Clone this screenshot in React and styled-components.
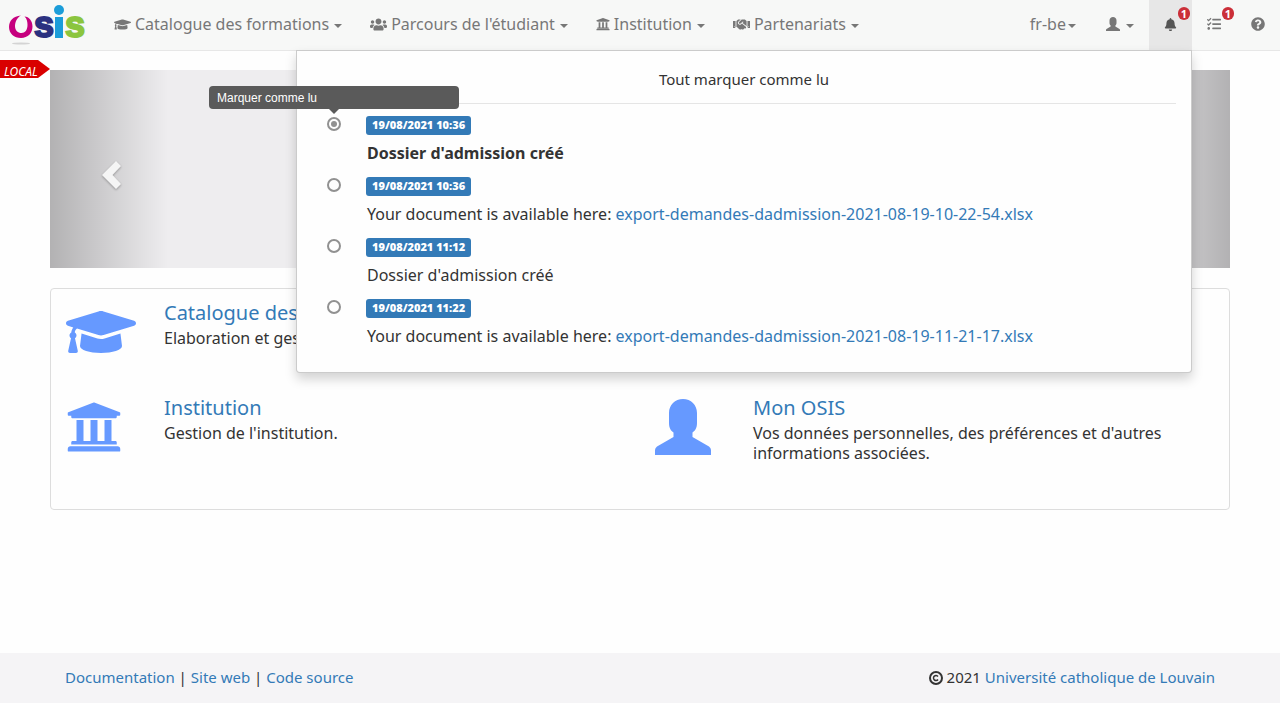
import React from "react";
import styled, { createGlobalStyle, css } from "styled-components";
import {
  FaGraduationCap,
  FaUsers,
  FaUniversity,
  FaHandshake,
  FaBell,
  FaTasks,
  FaQuestionCircle,
} from "react-icons/fa";

const UserIcon = ({ size }) => (
  <svg width={size} height={size} viewBox="0 0 56 56" fill="currentColor" aria-hidden="true">
    <path d="M28 0C36 0 42 6 42 14V24C42 29 40 32 37.500 33.500V38L54 47.500Q56 49 56 51V56H0V51Q0 49 2 47.500L18.500 38V33.500C16 32 14 29 14 24V14C14 6 20 0 28 0Z" />
  </svg>
);

const Chevron = ({ flip }) => (
  <svg width="20" height="28" viewBox="0 0 20 28" fill="currentColor" aria-hidden="true">
    <path
      d="M0 14L14 0L19 5L10.500 14L19 23L14 28Z"
      transform={flip ? "matrix(-1 0 0 1 20 0)" : undefined}
    />
  </svg>
);

const ReadIcon = ({ dot }) => (
  <svg width="14" height="14" viewBox="0 0 14 14" aria-hidden="true">
    <circle cx="7" cy="7" r="6" fill="none" stroke="currentColor" strokeWidth="2" />
    {dot && <circle cx="7" cy="7" r="3" fill="currentColor" />}
  </svg>
);

const CopyrightIcon = () => (
  <svg width="14" height="14" viewBox="0 0 14 14" fill="none" stroke="currentColor" aria-hidden="true">
    <circle cx="7" cy="7" r="6" strokeWidth="2" />
    <path d="M9 5.500A2.500 2.500 0 1 0 9 8.500" strokeWidth="1.500" />
  </svg>
);

const Logo = () => (
  <svg width="78" height="42" viewBox="0 0 78 42" role="img" aria-label="osis">
    <ellipse cx="12" cy="38.500" rx="9" ry="1" fill="#d4d4d4" />
    <path
      fill="#c6007e"
      d="M12 10.500C4 11 0 16 0 22C0 28.500 5 33 12 33S23.500 28 23.500 21.500C23.500 16 20 11.500 15.500 11.500C18 13.500 18.500 17 18.500 20C18.500 25 16 28 12.500 28S6 25.500 6 21C6 17 8 12.500 12 10.500Z"
    />
    <g fontFamily="Liberation Sans, sans-serif" fontWeight="700" fontSize="36" strokeWidth="2">
      <text x="25" y="32" fill="#2b3180" stroke="#2b3180">s</text>
      <text x="56" y="32" fill="#8bc53f" stroke="#8bc53f">s</text>
    </g>
    <circle cx="50" cy="5" r="5" fill="#1b9dd9" />
    <rect x="46" y="12" width="8" height="21" fill="#1b9dd9" />
  </svg>
);

const navItems = [
  { label: "Catalogue des formations", icon: <FaGraduationCap size={17} /> },
  { label: "Parcours de l'étudiant", icon: <FaUsers size={17} /> },
  { label: "Institution", icon: <FaUniversity size={14} /> },
  { label: "Partenariats", icon: <FaHandshake size={17} /> },
];

const notifications = [
  { date: "19/08/2021 10:36", text: "Dossier d'admission créé", unread: true },
  {
    date: "19/08/2021 10:36",
    text: "Your document is available here: ",
    file: "export-demandes-dadmission-2021-08-19-10-22-54.xlsx",
  },
  { date: "19/08/2021 11:12", text: "Dossier d'admission créé" },
  {
    date: "19/08/2021 11:22",
    text: "Your document is available here: ",
    file: "export-demandes-dadmission-2021-08-19-11-21-17.xlsx",
  },
];

const sections = [
  {
    title: "Catalogue des formations",
    text: "Elaboration et gestion",
    icon: <FaGraduationCap size={70} />,
    wide: true,
  },
  {
    title: "Institution",
    text: "Gestion de l'institution.",
    icon: <FaUniversity size={56} />,
  },
  {
    title: "Mon OSIS",
    text: "Vos données personnelles, des préférences et d'autres informations associées.",
    icon: <UserIcon size={56} />,
  },
];

const Notifications = () => (
  <Menu>
    <MarkAll type="button">Tout marquer comme lu</MarkAll>
    <NotificationList>
      {notifications.map((item, i) => (
        <Notification key={i}>
          <MarkButton type="button" aria-label="Marquer comme lu">
            <ReadIcon dot={item.unread} />
            {item.unread && <Tooltip role="tooltip">Marquer comme lu</Tooltip>}
          </MarkButton>
          <div>
            <DateLabel>{item.date}</DateLabel>
            <Message $unread={item.unread}>
              {item.text}
              {item.file && <Link href="#">{item.file}</Link>}
            </Message>
          </div>
        </Notification>
      ))}
    </NotificationList>
  </Menu>
);

const App = () => (
  <Page>
    <GlobalStyle />
    <Navbar>
      <Brand href="#">
        <Logo />
      </Brand>
      <NavLeft>
        {navItems.map((item) => (
          <NavButton type="button" key={item.label}>
            {item.icon}
            {item.label}
            <Caret />
          </NavButton>
        ))}
      </NavLeft>
      <NavRight>
        <NavButton type="button" $tight>
          fr-be
          <Caret $tight />
        </NavButton>
        <NavButton type="button" aria-label="Profil">
          <UserIcon size={14} />
          <Caret />
        </NavButton>
        <BellItem>
          <NavButton type="button" $active aria-label="Notifications">
            <FaBell size={13} />
            <Badge>1</Badge>
          </NavButton>
          <Notifications />
        </BellItem>
        <NavButton type="button" aria-label="Tâches">
          <FaTasks size={14} />
          <Badge>1</Badge>
        </NavButton>
        <NavButton type="button" aria-label="Aide">
          <FaQuestionCircle size={14} />
        </NavButton>
      </NavRight>
    </Navbar>

    <Main>
      <Ribbon>LOCAL</Ribbon>
      <Carousel>
        <CarouselControl type="button" aria-label="Précédent">
          <Chevron />
        </CarouselControl>
        <CarouselControl type="button" aria-label="Suivant" $right>
          <Chevron flip />
        </CarouselControl>
      </Carousel>
      <Panel>
        {sections.map((section) => (
          <Section key={section.title} $wide={section.wide}>
            <SectionIcon>{section.icon}</SectionIcon>
            <SectionBody>
              <SectionTitle>
                <Link href="#">{section.title}</Link>
              </SectionTitle>
              <SectionText>{section.text}</SectionText>
            </SectionBody>
          </Section>
        ))}
      </Panel>
    </Main>

    <Footer>
      <div>
        <Link href="#">Documentation</Link> | <Link href="#">Site web</Link> |{" "}
        <Link href="#">Code source</Link>
      </div>
      <Copyright>
        <CopyrightIcon /> 2021 <Link href="#">Université catholique de Louvain</Link>
      </Copyright>
    </Footer>
  </Page>
);

export default App;

const GlobalStyle = createGlobalStyle`
  * {
    box-sizing: border-box;
  }

  body {
    margin: 0;
    background: #fefefe;
    color: #333;
    font-family: "Noto Sans", sans-serif;
    font-size: 16px;
    line-height: 20px;
  }

  button {
    padding: 0;
    border: 0;
    background: none;
    color: inherit;
    font: inherit;
    cursor: pointer;
  }
`;

const Page = styled.div`
  display: flex;
  flex-direction: column;
  min-height: 100vh;
`;

const Link = styled.a`
  color: #337ab7;
  text-decoration: none;
`;

const Navbar = styled.nav`
  display: flex;
  height: 51px;
  background: #f7f8f7;
  border-bottom: 1px solid #e7e7e7;
`;

const Brand = styled.a`
  padding: 5px 12px 0 9px;
`;

const NavButton = styled.button`
  position: relative;
  display: flex;
  align-items: center;
  gap: 4px;
  height: 50px;
  padding: 0 15px 2px;
  color: #777;
  white-space: nowrap;

  ${(props) => props.$tight && css`gap: 2px;`}

  ${(props) =>
    props.$active &&
    css`
      background: #e7e7e7;
      color: #555;
    `}
`;

const Caret = styled.span`
  margin-left: ${(props) => (props.$tight ? "0" : "2px")};
  margin-top: 4px;
  border-top: 4px solid;
  border-left: 4px solid transparent;
  border-right: 4px solid transparent;
`;

const NavLeft = styled.div`
  display: flex;

  ${NavButton} {
    padding-right: 13px;
  }

  ${Caret} {
    margin-left: 1px;
  }
`;

const NavRight = styled.div`
  display: flex;
  margin-left: auto;
`;

const BellItem = styled.div`
  position: relative;
`;

const Badge = styled.span`
  position: absolute;
  top: 7px;
  right: 2px;
  width: 12px;
  height: 13px;
  border-radius: 6px;
  background: #cb2f38;
  color: #fff;
  font-size: 11px;
  font-weight: 700;
  line-height: 13px;
  text-align: center;
`;

const Menu = styled.div`
  position: absolute;
  z-index: 10;
  top: 50px;
  right: 0;
  width: 70vw;
  padding: 18px 15px 12px;
  background: #fefefe;
  border: 1px solid rgba(0, 0, 0, 0.2);
  border-radius: 0 0 4px 4px;
  box-shadow: 0 6px 12px rgba(0, 0, 0, 0.175);
`;

const MarkAll = styled.button`
  display: block;
  width: 100%;
  padding-bottom: 14px;
  border-bottom: 1px solid #e5e5e5;
  font-size: 15px;
`;

const NotificationList = styled.ul`
  margin: 0;
  padding: 12px 15px 0;
  list-style: none;
`;

const Notification = styled.li`
  display: flex;
  align-items: flex-start;
  gap: 25px;
  height: 61px;
`;

const MarkButton = styled.button`
  position: relative;
  display: flex;
  padding-top: 1px;
  color: #919191;
`;

const Tooltip = styled.span`
  position: absolute;
  bottom: 22px;
  left: 50%;
  width: 250px;
  margin-left: -125px;
  padding: 2px 8px 1px;
  border-radius: 4px;
  background: #5a5a5a;
  color: #fff;
  font-family: "Liberation Sans", sans-serif;
  font-size: 12px;
  text-align: left;

  &::after {
    content: "";
    position: absolute;
    top: 100%;
    left: 50%;
    margin-left: -5px;
    border: 5px solid transparent;
    border-top-color: #5a5a5a;
  }
`;

const DateLabel = styled.span`
  display: block;
  width: fit-content;
  padding: 0 6px 2px;
  border-radius: 3px;
  background: #337ab7;
  color: #fff;
  font-size: 11px;
  font-weight: 900;
  line-height: 17px;
`;

const Message = styled.p`
  margin: 8px 0 0 1px;
  font-weight: ${(props) => (props.$unread ? 700 : 400)};
`;

const Main = styled.main`
  position: relative;
  flex: 1;
  padding: 19px 50px;
`;

const Ribbon = styled.span`
  position: absolute;
  top: 9px;
  left: 0;
  width: 50px;
  height: 18px;
  padding: 2px 4px 0;
  background: #d90000;
  clip-path: polygon(0 0, 76% 0, 100% 50%, 76% 100%, 0 100%);
  color: #fff;
  font-size: 12px;
  font-style: italic;
`;

const Carousel = styled.div`
  display: flex;
  justify-content: space-between;
  height: 198px;
  margin-bottom: 20px;
  background: #eeedef;
`;

const CarouselControl = styled.button`
  display: flex;
  align-items: center;
  justify-content: center;
  width: 10%;
  padding: 12px 0 0 6px;
  background: linear-gradient(
    ${(props) => (props.$right ? "to left" : "to right")},
    rgba(0, 0, 0, 0.25),
    rgba(0, 0, 0, 0)
  );
  color: #f5f5f5;

  svg {
    filter: drop-shadow(0 1px 1px rgba(0, 0, 0, 0.3));
  }
`;

const Panel = styled.section`
  display: grid;
  grid-template-columns: 1fr 1fr;
  grid-auto-rows: 95px;
  padding: 12px 0 18px;
  border: 1px solid #ddd;
  border-radius: 4px;
`;

const Section = styled.article`
  display: flex;
  grid-column: ${(props) => (props.$wide ? "span 2" : "auto")};
  padding: 0 15px;
`;

const SectionIcon = styled.div`
  display: flex;
  align-items: center;
  flex: 0 0 98px;
  height: 62px;
  color: #6699ff;
`;

const SectionBody = styled.div`
  flex: 1;
  padding-right: 20px;
`;

const SectionTitle = styled.h2`
  margin: 0 0 3px;
  font-size: 20px;
  font-weight: 400;
  line-height: 24px;
`;

const SectionText = styled.p`
  margin: 0;
`;

const Footer = styled.footer`
  display: flex;
  justify-content: space-between;
  padding: 14px 65px 16px;
  background: #f5f4f6;
  font-size: 15px;
`;

const Copyright = styled.div`
  svg {
    vertical-align: -2px;
  }
`;
